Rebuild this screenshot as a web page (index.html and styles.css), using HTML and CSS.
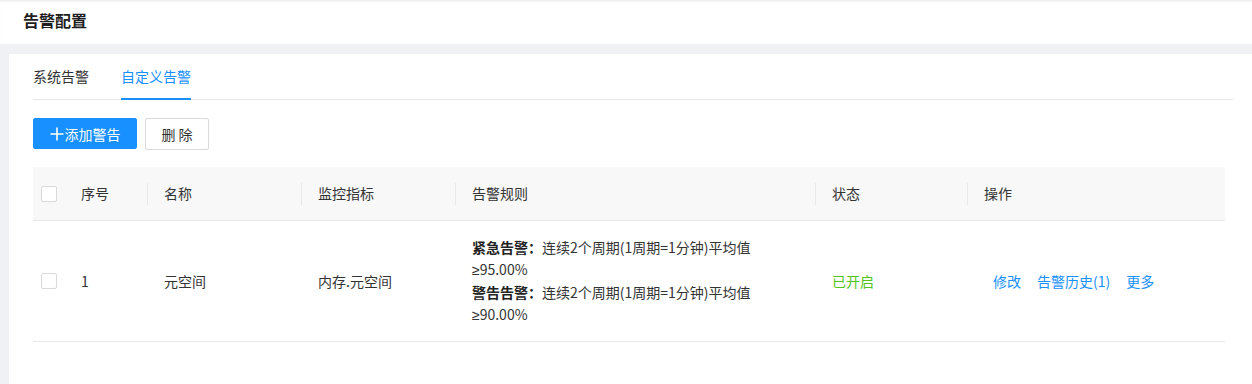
FILE: index.html
```html
<!DOCTYPE html>
<html lang="zh-CN">
  <head>
    <meta charset="UTF-8" />
    <meta name="viewport" content="width=device-width, initial-scale=1.0" />
    <title>告警配置</title>
    <link rel="stylesheet" href="styles.css">
  </head>
  <body>
    <header class="page-header">
      <h1>告警配置</h1>
    </header>

    <main class="card">
      <div class="tabs">
        <div class="tab">系统告警</div>
        <div class="tab active">自定义告警</div>
      </div>

      <div class="toolbar">
        <button class="button primary">
          <svg class="plus" width="14" height="14" viewBox="0 0 14 14">
            <path d="M7 0.5V13.5M0.5 7H13.5" stroke="#fff" stroke-width="1.6" fill="none" />
          </svg>
          添加警告
        </button>
        <button class="button">删 除</button>
      </div>

      <table class="table">
        <colgroup>
          <col style="width: 32px" />
          <col style="width: 83px" />
          <col style="width: 154px" />
          <col style="width: 154px" />
          <col style="width: 360px" />
          <col style="width: 152px" />
          <col />
        </colgroup>
        <thead>
          <tr>
            <th class="check-cell"><span class="checkbox"></span></th>
            <th>序号</th>
            <th class="sep">名称</th>
            <th class="sep">监控指标</th>
            <th class="sep">告警规则</th>
            <th class="sep">状态</th>
            <th class="sep">操作</th>
          </tr>
        </thead>
        <tbody>
          <tr>
            <td class="check-cell"><span class="checkbox"></span></td>
            <td>1</td>
            <td>元空间</td>
            <td>内存.元空间</td>
            <td class="rules">
              <div><b>紧急告警<span class="colon">：</span></b>连续2个周期(1周期=1分钟)平均值</div>
              <div><span class="ge">≥</span>95.00%</div>
              <div><b>警告告警<span class="colon">：</span></b>连续2个周期(1周期=1分钟)平均值</div>
              <div><span class="ge">≥</span>90.00%</div>
            </td>
            <td class="status-on">已开启</td>
            <td>
              <div class="actions">
                <a href="#">修改</a>
                <a href="#">告警历史(1)</a>
                <a href="#">更多</a>
              </div>
            </td>
          </tr>
        </tbody>
      </table>
    </main>
  </body>
</html>
```

FILE: styles.css
```css
body {
  margin: 0;
  background-color: #f0f1f5;
  font-family: "Noto Sans CJK SC", "Noto Sans", sans-serif;
  font-size: 14px;
  color: #333;
}

.page-header {
  height: 44px;
  background-color: #fff;
  box-shadow: inset 0 3px 3px -2px #e6e6e6;
  display: flex;
  align-items: center;
  padding-left: 23px;
}
.page-header h1 {
  margin: 0;
  font-size: 16px;
  font-weight: bold;
  color: #1f1f1f;
  line-height: 20px;
  margin-top: -5px;
}

.card {
  background-color: #fff;
  margin: 10px 0 0 9px;
  padding: 0 18px 40px 24px;
  min-height: 290px;
}

.tabs {
  display: flex;
  gap: 32px;
  height: 46px;
  border-bottom: 1px solid #e8e8e8;
  box-sizing: border-box;
}
.tab {
  font-size: 14px;
  line-height: 20px;
  padding-top: 12px;
  color: #333;
  box-sizing: border-box;
  height: 46px;
}
.tab.active {
  color: #1890ff;
  border-bottom: 2px solid #1890ff;
}

.toolbar {
  display: flex;
  gap: 8px;
  margin-top: 18px;
}
.button {
  font-family: inherit;
  font-size: 14px;
  height: 32px;
  padding: 0;
  border: 1px solid #d9d9d9;
  border-radius: 2px;
  background-color: #fff;
  color: #333;
  cursor: pointer;
  width: 64px;
}
.button.primary {
  display: flex;
  align-items: center;
  justify-content: center;
  gap: 1px;
  background-color: #1890ff;
  border-color: #1890ff;
  color: #fff;
  width: 104px;
  height: 31px;
}
.plus {
  display: block;
}

.table {
  width: 1192px;
  margin-top: 17px;
  border-collapse: collapse;
  table-layout: fixed;
}
.table th {
  background-color: #f8f8f8;
  font-weight: normal;
  text-align: left;
  height: 51px;
  padding: 0 16px 2px;
  border-bottom: 1px solid #e8e8e8;
  position: relative;
  color: #333;
}
.table th.sep::before {
  content: "";
  position: absolute;
  left: -1px;
  top: 16px;
  width: 1px;
  height: 22px;
  background-color: #e8e8e8;
}
.table td {
  height: 119px;
  padding: 0 16px 1px;
  border-bottom: 1px solid #e8e8e8;
  vertical-align: middle;
}
.table th.check-cell,
.table td.check-cell {
  padding: 0 0 0 8px;
}
.checkbox {
  display: block;
  width: 16px;
  height: 16px;
  box-sizing: border-box;
  border: 1px solid #d9d9d9;
  border-radius: 2px;
  background-color: #fff;
}

.rules {
  line-height: 22px;
}
.rules b {
  color: #222;
}
.colon {
  display: inline-block;
  width: 14px;
  text-align: center;
}
.ge {
  font-family: "Liberation Sans", sans-serif;
}
.status-on {
  color: #52c41a;
}
.actions {
  display: flex;
  gap: 16px;
  padding-left: 9px;
}
.actions a {
  color: #1890ff;
  text-decoration: none;
}
```
